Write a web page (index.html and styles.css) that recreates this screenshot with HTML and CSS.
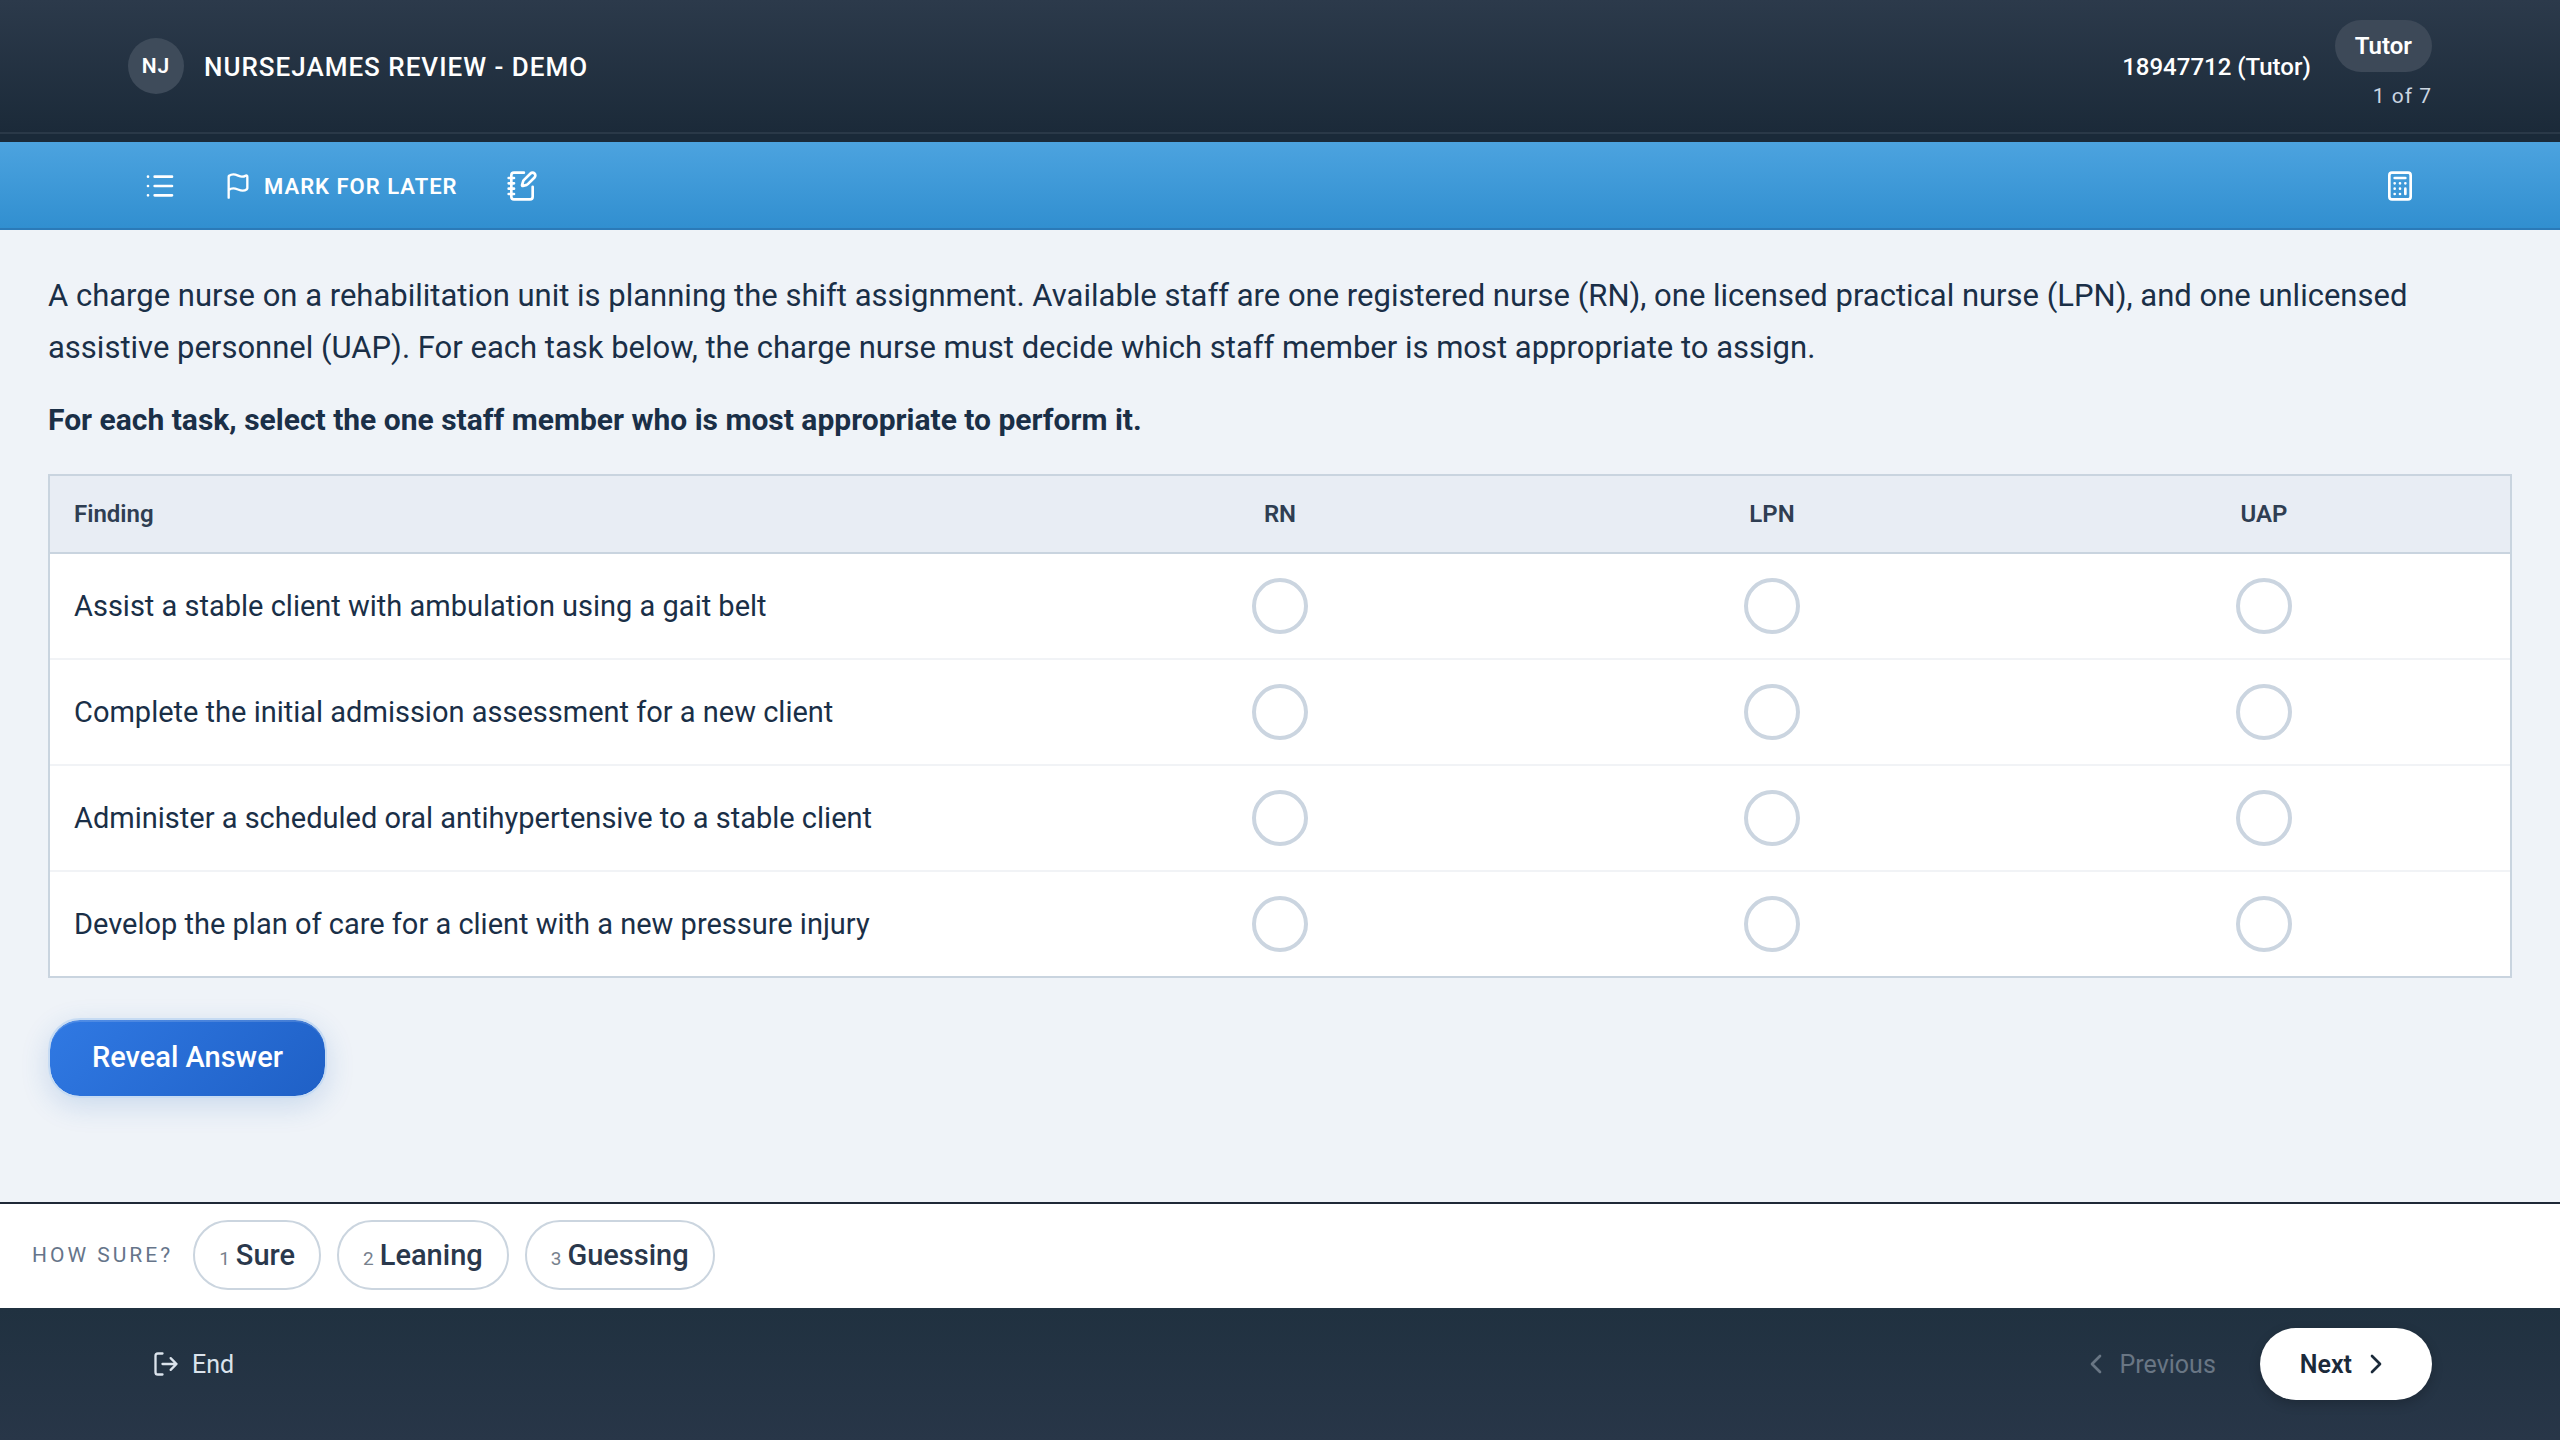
FILE: index.html
```html
<!DOCTYPE html>
<html lang="en">
<head>
  <meta charset="utf-8">
  <meta name="viewport" content="width=device-width, initial-scale=1">
  <title>NurseJames Review - Demo</title>
  <link rel="stylesheet" href="styles.css">
</head>
<body>
  <header class="header">
    <div class="brand">
      <span class="avatar">NJ</span>
      <h1 class="brand-title">NURSEJAMES REVIEW - DEMO</h1>
    </div>
    <div class="session">
      <span class="session-id">18947712 (Tutor)</span>
      <div class="session-info">
        <span class="mode">Tutor</span>
        <span class="progress">1 of 7</span>
      </div>
    </div>
  </header>

  <nav class="toolbar" aria-label="Question tools">
    <button class="tool" type="button" aria-label="Question list">
      <svg class="icon" viewBox="0 0 24 24"><path d="M3 5h.01M3 12h.01M3 19h.01M8 5h13M8 12h13M8 19h13"/></svg>
    </button>
    <button class="tool" type="button">
      <svg class="icon icon-small" viewBox="0 0 24 24"><path d="M4 22V4a1 1 0 0 1 .4-.8A6 6 0 0 1 8 2c3 0 5 2 7.333 2q2 0 3.067-.8A1 1 0 0 1 20 4v10a1 1 0 0 1-.4.8A6 6 0 0 1 16 16c-3 0-5-2-8-2a6 6 0 0 0-4 1.528"/></svg>
      MARK FOR LATER
    </button>
    <button class="tool" type="button" aria-label="Notes">
      <svg class="icon" viewBox="0 0 24 24"><path d="M13.4 2H6a2 2 0 0 0-2 2v16a2 2 0 0 0 2 2h12a2 2 0 0 0 2-2v-7.4M2 6h4M2 10h4M2 14h4M2 18h4"/><path d="M21.378 5.626a1 1 0 1 0-3.004-3.004l-5.01 5.012a2 2 0 0 0-.506.854l-.837 2.87a.5.5 0 0 0 .62.62l2.87-.837a2 2 0 0 0 .854-.506z"/></svg>
    </button>
    <button class="tool tool-end" type="button" aria-label="Calculator">
      <svg class="icon" viewBox="0 0 24 24"><rect width="16" height="20" x="4" y="2" rx="2"/><path d="M8 6h8M16 14v4M16 10h.01M12 10h.01M8 10h.01M12 14h.01M8 14h.01M12 18h.01M8 18h.01"/></svg>
    </button>
  </nav>

  <main class="question">
    <p class="stem">A charge nurse on a rehabilitation unit is planning the shift assignment. Available staff are one registered nurse (RN), one licensed practical nurse (LPN), and one unlicensed assistive personnel (UAP). For each task below, the charge nurse must decide which staff member is most appropriate to assign.</p>
    <p class="prompt">For each task, select the one staff member who is most appropriate to perform it.</p>

    <table class="matrix">
      <thead>
        <tr>
          <th class="finding" scope="col">Finding</th>
          <th scope="col">RN</th>
          <th scope="col">LPN</th>
          <th scope="col">UAP</th>
        </tr>
      </thead>
      <tbody>
        <tr>
          <th class="finding" scope="row">Assist a stable client with ambulation using a gait belt</th>
          <td><input class="choice" type="radio" name="task1" aria-label="Assist with ambulation: RN"></td>
          <td><input class="choice" type="radio" name="task1" aria-label="Assist with ambulation: LPN"></td>
          <td><input class="choice" type="radio" name="task1" aria-label="Assist with ambulation: UAP"></td>
        </tr>
        <tr>
          <th class="finding" scope="row">Complete the initial admission assessment for a new client</th>
          <td><input class="choice" type="radio" name="task2" aria-label="Initial assessment: RN"></td>
          <td><input class="choice" type="radio" name="task2" aria-label="Initial assessment: LPN"></td>
          <td><input class="choice" type="radio" name="task2" aria-label="Initial assessment: UAP"></td>
        </tr>
        <tr>
          <th class="finding" scope="row">Administer a scheduled oral antihypertensive to a stable client</th>
          <td><input class="choice" type="radio" name="task3" aria-label="Oral antihypertensive: RN"></td>
          <td><input class="choice" type="radio" name="task3" aria-label="Oral antihypertensive: LPN"></td>
          <td><input class="choice" type="radio" name="task3" aria-label="Oral antihypertensive: UAP"></td>
        </tr>
        <tr>
          <th class="finding" scope="row">Develop the plan of care for a client with a new pressure injury</th>
          <td><input class="choice" type="radio" name="task4" aria-label="Plan of care: RN"></td>
          <td><input class="choice" type="radio" name="task4" aria-label="Plan of care: LPN"></td>
          <td><input class="choice" type="radio" name="task4" aria-label="Plan of care: UAP"></td>
        </tr>
      </tbody>
    </table>

    <button class="reveal" type="button">Reveal Answer</button>
  </main>

  <section class="confidence" aria-labelledby="sure-label">
    <span class="confidence-label" id="sure-label">HOW SURE?</span>
    <div class="confidence-options">
      <button class="pill" type="button"><span class="pill-key">1</span>Sure</button>
      <button class="pill" type="button"><span class="pill-key">2</span>Leaning</button>
      <button class="pill" type="button"><span class="pill-key">3</span>Guessing</button>
    </div>
  </section>

  <footer class="footer">
    <button class="nav-button" type="button">
      <svg class="icon icon-small" viewBox="0 0 24 24"><path d="M16 17l5-5-5-5M21 12H9M9 21H5a2 2 0 0 1-2-2V5a2 2 0 0 1 2-2h4"/></svg>
      End
    </button>
    <div class="pager">
      <button class="nav-button previous" type="button" disabled>
        <svg class="icon" viewBox="0 0 24 24"><path d="M15 18l-6-6 6-6"/></svg>
        Previous
      </button>
      <button class="nav-button next" type="button">
        Next
        <svg class="icon" viewBox="0 0 24 24"><path d="M9 18l6-6-6-6"/></svg>
      </button>
    </div>
  </footer>
</body>
</html>
```
FILE: styles.css
```css
* {
  box-sizing: border-box;
}

body {
  display: flex;
  flex-direction: column;
  min-height: 100vh;
  margin: 0;
  background: #eff3f8;
  color: #1a2f47;
  font-family: Roboto, "Liberation Sans", sans-serif;
}

button {
  margin: 0;
  border: 0;
  background: none;
  color: inherit;
  font: inherit;
  cursor: pointer;
}

.icon {
  flex: none;
  width: 32px;
  height: 32px;
  fill: none;
  stroke: currentColor;
  stroke-width: 2;
  stroke-linecap: round;
  stroke-linejoin: round;
}

.icon-small {
  width: 28px;
  height: 28px;
}

/* Header */

.header {
  display: flex;
  align-items: center;
  justify-content: space-between;
  padding: 20px 128px;
  background: linear-gradient(#2c3a4b, #1b2a39);
  border-bottom: 2px solid #2a3948;
  color: #fff;
}

.brand {
  display: flex;
  align-items: center;
  gap: 20px;
}

.avatar {
  display: grid;
  place-items: center;
  width: 56px;
  height: 56px;
  border-radius: 50%;
  background: #3e4b5a;
  font-size: 21px;
  font-weight: 600;
  letter-spacing: 1px;
}

.brand-title {
  margin: 0;
  padding-top: 2px;
  font-size: 26px;
  font-weight: 500;
  line-height: 32px;
  letter-spacing: 1px;
}

.session {
  display: flex;
  align-items: center;
  gap: 24px;
}

.session-id {
  padding-top: 2px;
  font-size: 24px;
  font-weight: 500;
  line-height: 32px;
}

.session-info {
  display: flex;
  flex-direction: column;
  align-items: flex-end;
  gap: 8px;
}

.mode {
  padding: 10px 20px;
  border-radius: 26px;
  background: #3d4958;
  font-size: 24px;
  font-weight: 600;
  line-height: 32px;
}

.progress {
  color: #cbd5e1;
  font-size: 21px;
  line-height: 32px;
  letter-spacing: 1px;
}

/* Toolbar */

.toolbar {
  display: flex;
  align-items: center;
  gap: 16px;
  padding: 12px 128px 10px;
  border-top: 8px solid #1a2a39;
  border-bottom: 2px solid #2b7ab8;
  background: linear-gradient(#4ca3df, #318fd0) padding-box;
  color: #fff;
}

.tool {
  display: flex;
  align-items: center;
  gap: 12px;
  height: 64px;
  padding: 0 16px;
  font-size: 22px;
  font-weight: 600;
  letter-spacing: 1px;
}

.tool-end {
  margin-left: auto;
}

/* Question */

.question {
  flex: 1;
  padding: 40px 48px;
}

.stem,
.prompt {
  margin: 0 0 20px;
  font-size: 31px;
  line-height: 52px;
}

.prompt {
  margin-bottom: 28px;
  font-size: 30px;
  font-weight: 700;
}

.matrix {
  width: 100%;
  margin-bottom: 40px;
  border: 2px solid #c9d4df;
  border-spacing: 0;
  table-layout: fixed;
  background: #fff;
}

.matrix th,
.matrix td {
  padding: 0;
  text-align: center;
}

.matrix thead th {
  height: 78px;
  border-bottom: 2px solid #c9d4df;
  background: #e8edf4;
  color: #2f3e52;
  font-size: 24px;
  font-weight: 600;
}

.matrix tbody th,
.matrix tbody td {
  height: 106px;
  border-bottom: 2px solid #f1f3f6;
  font-size: 29px;
  font-weight: 400;
}

.matrix tbody tr:last-child th,
.matrix tbody tr:last-child td {
  height: 104px;
  border-bottom: 0;
}

.matrix .finding {
  width: 40%;
  padding: 0 24px;
  text-align: left;
}

.choice {
  display: block;
  width: 56px;
  height: 56px;
  margin: 0 auto;
  border: 4px solid #cbd5e0;
  border-radius: 50%;
  background: #fff;
  appearance: none;
}

.choice:checked {
  background: radial-gradient(#266bd5 50%, #fff 55%);
  border-color: #266bd5;
}

.reveal {
  height: 80px;
  padding: 0 42px 2px;
  border: 2px solid #c6dbf3;
  border-radius: 32px;
  background: linear-gradient(135deg, #3079e3, #1f60c6) padding-box;
  box-shadow: inset 0 2px 0 rgba(255, 255, 255, 0.15), 0 8px 28px rgba(38, 107, 190, 0.18);
  color: #fff;
  font-size: 29px;
  font-weight: 500;
}

/* Confidence bar */

.confidence {
  display: flex;
  align-items: center;
  gap: 20px;
  padding: 16px 32px 18px;
  border-top: 2px solid #1f2937;
  background: #fff;
}

.confidence-label {
  color: #66758a;
  font-size: 21px;
  letter-spacing: 3px;
}

.confidence-options {
  display: flex;
  gap: 16px;
}

.pill {
  display: flex;
  align-items: baseline;
  gap: 6px;
  padding: 16px 24px;
  border: 2px solid #cbd5df;
  border-radius: 35px;
  color: #2a384c;
  font-size: 29px;
  font-weight: 500;
  line-height: 34px;
}

.pill-key {
  color: #77818d;
  font-size: 19px;
  font-weight: 400;
  line-height: 20px;
}

/* Footer */

.footer {
  display: flex;
  align-items: center;
  justify-content: space-between;
  padding: 20px 128px 40px;
  background: linear-gradient(#203140, #283648);
  color: #dbe3ec;
}

.nav-button {
  display: flex;
  align-items: center;
  gap: 12px;
  height: 72px;
  padding: 0 24px;
  font-size: 25px;
}

.pager {
  display: flex;
  gap: 20px;
}

.previous {
  gap: 8px;
  color: #697684;
}

.next {
  gap: 8px;
  padding: 0 40px;
  border-radius: 36px;
  background: #fff;
  box-shadow: 0 4px 12px rgba(0, 0, 0, 0.2);
  color: #1b2a3a;
  font-weight: 600;
}
```
